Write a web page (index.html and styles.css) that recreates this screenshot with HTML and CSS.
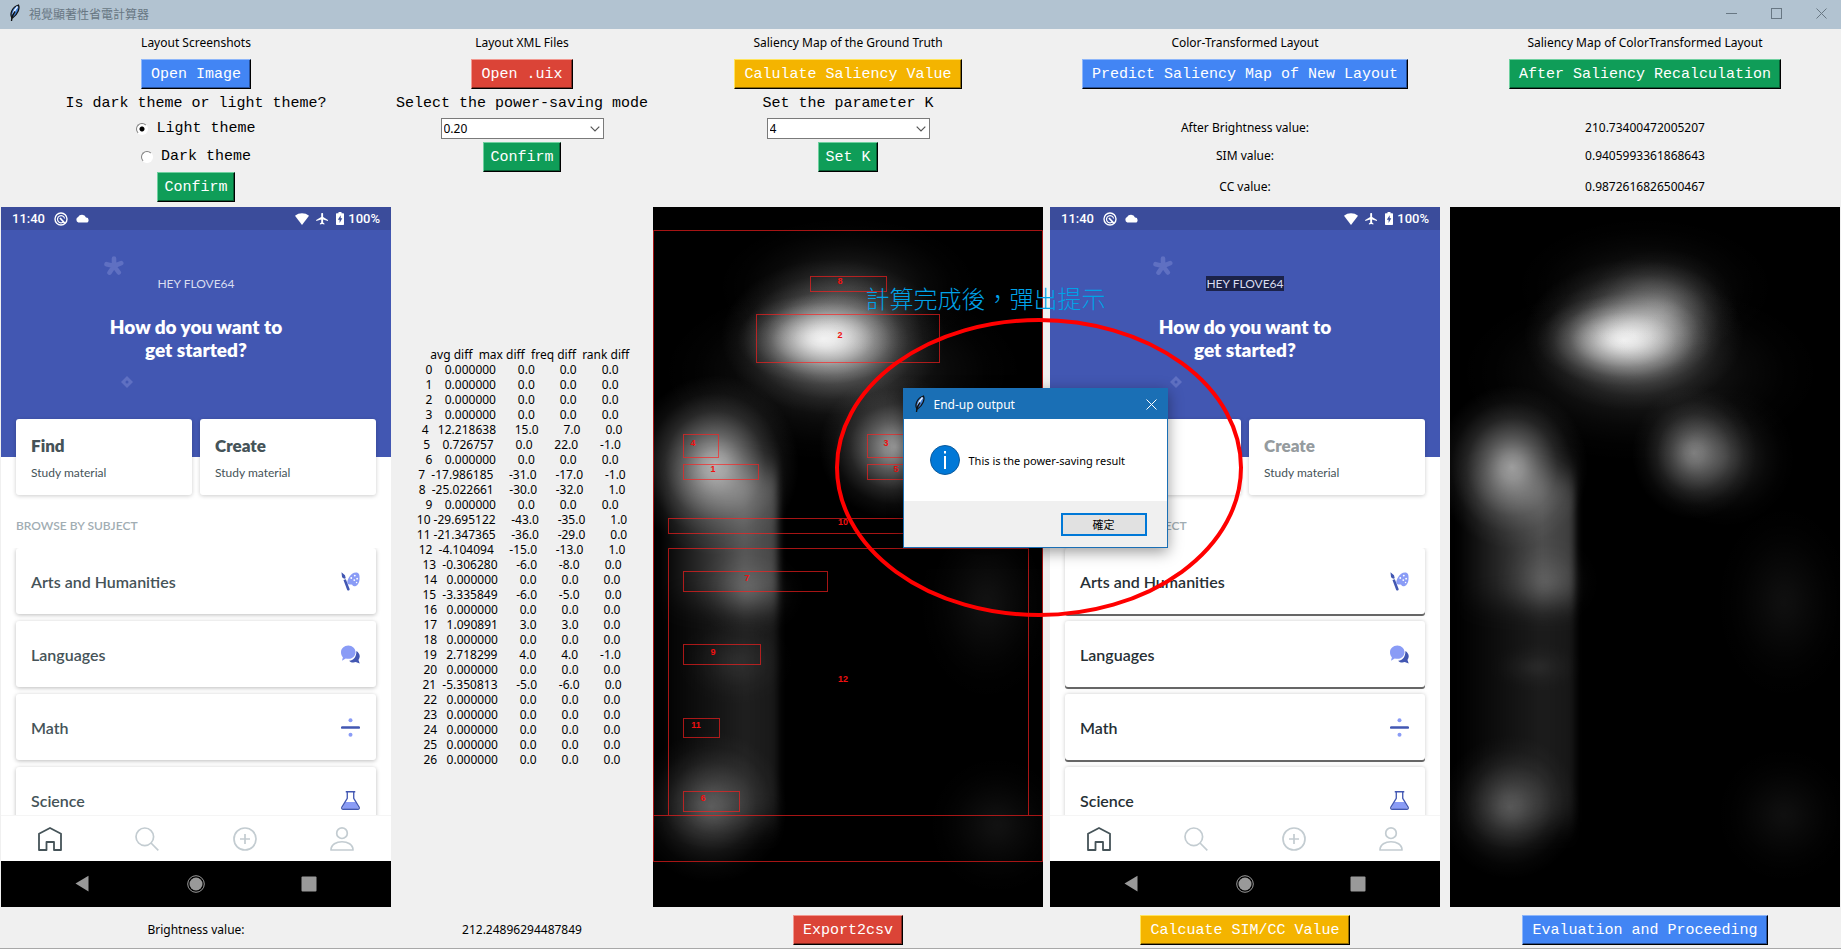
FILE: index.html
```html
<!DOCTYPE html>
<html lang="zh-Hant">
<head>
<meta charset="utf-8">
<title>視覺顯著性省電計算器</title>
<link rel="stylesheet" href="styles.css">
</head>
<body>
<svg class="defs" aria-hidden="true">
  <defs>
    <symbol id="feather" viewBox="0 0 16 18">
      <path d="M5 14C2.500 10 5 3 11.500 1c1.500 3-.5 9.500-6 13z" fill="#3f7fd6" stroke="#111" stroke-width="1.200"/>
      <path d="M6 10.500C7 7 8.500 4.500 10.500 2.500" stroke="#e8f2ff" stroke-width="1.600" fill="none"/>
      <path d="M4.500 17c0-3 1-6 3.500-9.500" stroke="#111" stroke-width="1.300" fill="none"/>
    </symbol>
    <symbol id="close" viewBox="0 0 11 11"><path d="M.5.5l10 10M10.500.5l-10 10" stroke="currentColor" fill="none"/></symbol>
    <symbol id="chevron" viewBox="0 0 10 6"><path d="M.7.7L5 5 9.300.7" stroke="#555" stroke-width="1.200" fill="none"/></symbol>
    <symbol id="record" viewBox="0 0 14 14">
      <circle cx="7" cy="7" r="6" fill="none" stroke="#fff" stroke-width="1.400"/>
      <path d="M9.800 9.600A3.600 3.600 0 1 1 10.600 6.500" fill="none" stroke="#fff" stroke-width="1.200"/>
      <path d="M6 6l5 5.500" stroke="#fff" stroke-width="1.800"/>
    </symbol>
    <symbol id="cloud" viewBox="0 0 14 9"><path d="M3.300 8.500a2.900 2.900 0 0 1-.2-5.400A4.300 4.300 0 0 1 11 3.500a2.500 2.500 0 0 1 .2 5z" fill="#fff"/></symbol>
    <symbol id="wifi" viewBox="0 0 14 12"><path d="M0 2.800C4 -.5 10 -.5 14 2.800L7 12z" fill="#fff"/></symbol>
    <symbol id="plane" viewBox="0 0 12 12"><path d="M12 8V6.900L7.100 4V.9a.9.9 0 0 0-1.900 0V4L.2 6.900V8l5-1.400v3L3.900 10.600V11.500l2.200-.6 2.300.6v-.9L7.100 9.600v-3z" fill="#fff"/></symbol>
    <symbol id="battery" viewBox="0 0 8 13"><path d="M2.500 0h3v1.300H7.300a.7.7 0 0 1 .7.700V12.300a.7.7 0 0 1-.7.700H.7a.7.7 0 0 1-.7-.7V2a.7.7 0 0 1 .7-.7h1.800z" fill="#fff"/><path d="M4.700 3.200L1.800 7.800h1.800v3.200l2.700-4.700H4.700z" fill="#3b4c9b"/></symbol>
    <symbol id="asterisk" viewBox="0 0 20 20"><path d="M10 10V2.500M10 10l7.200-2.800M10 10l4.800 6.500M10 10l-4.500 6.700M10 10L2.500 8.200" stroke="#5f70c2" stroke-width="4.600" stroke-linecap="round"/></symbol>
    <symbol id="gem" viewBox="0 0 12 12"><path d="M6 0l6 6-6 6-6-6z" fill="#5f70c2"/><circle cx="6" cy="6" r="1.500" fill="#4257b2"/></symbol>
    <symbol id="arts" viewBox="0 0 20 20">
      <path d="M16.500.6c2.600.3 3.300 3.200 3 7-.3 4.500-2.500 7.400-5.500 7.400-1.800 0-1.700-1.700-3-1.800-1.500-.2-3.600.4-4.200-1.300C5.900 9 10 0 16.500.6z" fill="#8a9cf6"/>
      <circle cx="14.500" cy="3.800" r="1" fill="#fff"/><circle cx="17" cy="7" r="1" fill="#fff"/><circle cx="10.800" cy="6.300" r="1" fill="#fff"/><circle cx="14" cy="8.500" r="1" fill="#fff"/><circle cx="16.400" cy="11" r=".8" fill="#fff"/>
      <path d="M.5.3l3.700 3.200.8 3-1.700.7L1.100 5.400zM2.600 8.400l2.500-.9 4 10.300c.3 1.600-1.800 2.600-2.700.9z" fill="#4257b2"/>
    </symbol>
    <symbol id="chat" viewBox="0 0 20 20">
      <path d="M8.500 16.500c4 .3 8-3.500 7.700-10.300 3.500 2 4.700 6.300 2.200 9.500l1.300 3.800-4.200-1.500c-2.600.9-5.300.4-7-1.500z" fill="#4257b2"/>
      <path d="M7.700.5c4.300 0 7.600 3.100 7.600 7s-3.300 7-7.600 7c-1 0-1.800-.1-2.700-.4L1 16.500l1-3.600C.7 11.500 0 9.700 0 7.500 0 3.600 3.400.5 7.700.5z" fill="#8a9cf6"/>
    </symbol>
    <symbol id="divide" viewBox="0 0 20 20"><path d="M1.300 10h17.400" stroke="#4257b2" stroke-width="2.700" stroke-linecap="round"/><circle cx="10" cy="2.400" r="2.100" fill="#8a9cf6"/><circle cx="10" cy="17.600" r="2.100" fill="#8a9cf6"/></symbol>
    <symbol id="flask" viewBox="0 0 20 20"><path d="M4.700 11.500h10.500l3.300 6.500-1.500.8H3L1.500 18z" fill="#8a9cf6"/><path d="M5 .8h10M6.600.8v7L1 17c-.6 1.200 0 2.200 1.300 2.200h15.400c1.300 0 1.900-1 1.300-2.200l-5.600-9.200v-7" fill="none" stroke="#4257b2" stroke-width="1.400"/></symbol>
    <symbol id="home" viewBox="0 0 24 24"><path d="M1 23V6.700L12 1l11 5.700V23h-7v-8H8.500v8z" fill="none" stroke="#455358" stroke-width="1.800" stroke-linejoin="round"/></symbol>
    <symbol id="search" viewBox="0 0 24 24"><circle cx="9.800" cy="9.800" r="8.800" fill="none" stroke="#c3ccd1" stroke-width="1.700"/><path d="M16 16l7.300 7.300" stroke="#c3ccd1" stroke-width="1.700"/></symbol>
    <symbol id="plus" viewBox="0 0 24 24"><circle cx="12" cy="12" r="11" fill="none" stroke="#c3ccd1" stroke-width="1.700"/><path d="M12 7v10M7 12h10" stroke="#c3ccd1" stroke-width="1.700"/></symbol>
    <symbol id="person" viewBox="0 0 24 24"><circle cx="12" cy="6.200" r="5.300" fill="none" stroke="#c3ccd1" stroke-width="1.700"/><path d="M1 23c0-11 22-11 22 0z" fill="none" stroke="#c3ccd1" stroke-width="1.700" stroke-linejoin="round"/></symbol>
    <symbol id="nav-back" viewBox="0 0 18 18"><path d="M2.500 8.500L15.500.8v15.700z" fill="#999"/></symbol>
    <symbol id="nav-home" viewBox="0 0 18 18"><circle cx="9" cy="9" r="8.300" fill="none" stroke="#999"/><circle cx="9" cy="9" r="6.500" fill="#999"/></symbol>
    <symbol id="nav-recent" viewBox="0 0 18 18"><rect x="1.500" y="1.500" width="15" height="15" rx="1" fill="#999"/></symbol>
    <radialGradient id="glow">
      <stop offset="0" stop-color="#fff"/><stop offset=".15" stop-color="#fff" stop-opacity=".86"/><stop offset=".35" stop-color="#fff" stop-opacity=".56"/><stop offset=".6" stop-color="#fff" stop-opacity=".23"/><stop offset=".8" stop-color="#fff" stop-opacity=".07"/><stop offset="1" stop-color="#fff" stop-opacity="0"/>
    </radialGradient>
    <linearGradient id="band" x2="1">
      <stop offset="0" stop-color="#fff" stop-opacity="0"/><stop offset=".35" stop-color="#fff" stop-opacity=".5"/><stop offset=".7" stop-color="#fff"/><stop offset=".95" stop-color="#fff" stop-opacity=".8"/><stop offset="1" stop-color="#fff" stop-opacity="0"/>
    </linearGradient>
    <filter id="soft" x="-30%" y="-30%" width="160%" height="160%"><feGaussianBlur stdDeviation="3 14"/></filter>
  </defs>
</svg>

<div class="window">
  <header class="titlebar">
    <svg class="feather"><use href="#feather"/></svg>
    <span class="title">視覺顯著性省電計算器</span>
    <div class="controls">
      <button class="control" aria-label="Minimize"><svg viewBox="0 0 11 11"><path d="M0 5.500h11" stroke="currentColor"/></svg></button>
      <button class="control" aria-label="Maximize"><svg viewBox="0 0 11 11"><rect x=".5" y=".5" width="10" height="10" fill="none" stroke="currentColor"/></svg></button>
      <button class="control" aria-label="Close"><svg><use href="#close"/></svg></button>
    </div>
  </header>

  <main class="board">
    <div class="cell">Layout Screenshots</div>
    <div class="cell">Layout XML Files</div>
    <div class="cell">Saliency Map of the Ground Truth</div>
    <div class="cell">Color-Transformed Layout</div>
    <div class="cell last">Saliency Map of ColorTransformed Layout</div>

    <div class="cell"><button class="btn blue">Open Image</button></div>
    <div class="cell"><button class="btn red">Open .uix</button></div>
    <div class="cell"><button class="btn yellow">Calulate Saliency Value</button></div>
    <div class="cell"><button class="btn blue">Predict Saliency Map of New Layout</button></div>
    <div class="cell last"><button class="btn green">After Saliency Recalculation</button></div>

    <div class="cell mono">Is dark theme or light theme?</div>
    <label class="cell mono" for="mode">Select the power-saving mode</label>
    <label class="cell mono" for="param">Set the parameter K</label>
    <div class="cell"></div>
    <div class="cell last"></div>

    <div class="cell"><label class="radio mono"><input type="radio" name="theme" checked>Light theme</label></div>
    <div class="cell"><span class="combo"><select id="mode"><option>0.20</option></select><svg><use href="#chevron"/></svg></span></div>
    <div class="cell"><span class="combo"><select id="param"><option>4</option></select><svg><use href="#chevron"/></svg></span></div>
    <div class="cell">After Brightness value:</div>
    <div class="cell last">210.73400472005207</div>

    <div class="cell"><label class="radio mono"><input type="radio" name="theme">Dark theme</label></div>
    <div class="cell"><button class="btn green small">Confirm</button></div>
    <div class="cell"><button class="btn green small">Set K</button></div>
    <div class="cell">SIM value:</div>
    <div class="cell last">0.9405993361868643</div>

    <div class="cell"><button class="btn green small">Confirm</button></div>
    <div class="cell"></div>
    <div class="cell"></div>
    <div class="cell">CC value:</div>
    <div class="cell last">0.9872616826500467</div>

    <section class="picture">
      <div class="phone">
        <div class="status"><span>11:40</span><svg class="i14"><use href="#record"/></svg><svg class="cloud"><use href="#cloud"/></svg><svg class="i14 push"><use href="#wifi"/></svg><svg class="i12"><use href="#plane"/></svg><span class="charge"><svg><use href="#battery"/></svg>100%</span></div>
        <div class="hero">
          <svg class="asterisk"><use href="#asterisk"/></svg>
          <svg class="gem"><use href="#gem"/></svg>
          <p class="hey"><span>HEY FLOVE64</span></p>
          <h2>How do you want to<br>get started?</h2>
        </div>
        <div class="tiles">
          <div class="tile"><h3>Find</h3><p>Study material</p></div>
          <div class="tile"><h3>Create</h3><p>Study material</p></div>
        </div>
        <h4>BROWSE BY SUBJECT</h4>
        <ul class="subjects">
          <li>Arts and Humanities<svg><use href="#arts"/></svg></li>
          <li>Languages<svg><use href="#chat"/></svg></li>
          <li>Math<svg><use href="#divide"/></svg></li>
          <li>Science<svg><use href="#flask"/></svg></li>
        </ul>
        <div class="tabs"><svg><use href="#home"/></svg><svg><use href="#search"/></svg><svg><use href="#plus"/></svg><svg><use href="#person"/></svg></div>
        <div class="keys"><svg><use href="#nav-back"/></svg><svg><use href="#nav-home"/></svg><svg><use href="#nav-recent"/></svg></div>
      </div>
    </section>

    <section class="report">
      <table>
        <thead><tr><th>  </th><th>   avg diff</th><th>  max diff</th><th>  freq diff</th><th>  rank diff</th></tr></thead>
        <tbody>
          <tr><td>0 </td><td>   0.000000</td><td>       0.0</td><td>        0.0</td><td>        0.0</td></tr>
          <tr><td>1 </td><td>   0.000000</td><td>       0.0</td><td>        0.0</td><td>        0.0</td></tr>
          <tr><td>2 </td><td>   0.000000</td><td>       0.0</td><td>        0.0</td><td>        0.0</td></tr>
          <tr><td>3 </td><td>   0.000000</td><td>       0.0</td><td>        0.0</td><td>        0.0</td></tr>
          <tr><td>4 </td><td>  12.218638</td><td>      15.0</td><td>        7.0</td><td>        0.0</td></tr>
          <tr><td>5 </td><td>   0.726757</td><td>       0.0</td><td>       22.0</td><td>       -1.0</td></tr>
          <tr><td>6 </td><td>   0.000000</td><td>       0.0</td><td>        0.0</td><td>        0.0</td></tr>
          <tr><td>7 </td><td> -17.986185</td><td>     -31.0</td><td>      -17.0</td><td>       -1.0</td></tr>
          <tr><td>8 </td><td> -25.022661</td><td>     -30.0</td><td>      -32.0</td><td>        1.0</td></tr>
          <tr><td>9 </td><td>   0.000000</td><td>       0.0</td><td>        0.0</td><td>        0.0</td></tr>
          <tr><td>10</td><td> -29.695122</td><td>     -43.0</td><td>      -35.0</td><td>        1.0</td></tr>
          <tr><td>11</td><td> -21.347365</td><td>     -36.0</td><td>      -29.0</td><td>        0.0</td></tr>
          <tr><td>12</td><td>  -4.104094</td><td>     -15.0</td><td>      -13.0</td><td>        1.0</td></tr>
          <tr><td>13</td><td>  -0.306280</td><td>      -6.0</td><td>       -8.0</td><td>        0.0</td></tr>
          <tr><td>14</td><td>   0.000000</td><td>       0.0</td><td>        0.0</td><td>        0.0</td></tr>
          <tr><td>15</td><td>  -3.335849</td><td>      -6.0</td><td>       -5.0</td><td>        0.0</td></tr>
          <tr><td>16</td><td>   0.000000</td><td>       0.0</td><td>        0.0</td><td>        0.0</td></tr>
          <tr><td>17</td><td>   1.090891</td><td>       3.0</td><td>        3.0</td><td>        0.0</td></tr>
          <tr><td>18</td><td>   0.000000</td><td>       0.0</td><td>        0.0</td><td>        0.0</td></tr>
          <tr><td>19</td><td>   2.718299</td><td>       4.0</td><td>        4.0</td><td>       -1.0</td></tr>
          <tr><td>20</td><td>   0.000000</td><td>       0.0</td><td>        0.0</td><td>        0.0</td></tr>
          <tr><td>21</td><td>  -5.350813</td><td>      -5.0</td><td>       -6.0</td><td>        0.0</td></tr>
          <tr><td>22</td><td>   0.000000</td><td>       0.0</td><td>        0.0</td><td>        0.0</td></tr>
          <tr><td>23</td><td>   0.000000</td><td>       0.0</td><td>        0.0</td><td>        0.0</td></tr>
          <tr><td>24</td><td>   0.000000</td><td>       0.0</td><td>        0.0</td><td>        0.0</td></tr>
          <tr><td>25</td><td>   0.000000</td><td>       0.0</td><td>        0.0</td><td>        0.0</td></tr>
          <tr><td>26</td><td>   0.000000</td><td>       0.0</td><td>        0.0</td><td>        0.0</td></tr>
        </tbody>
      </table>
    </section>

    <section class="picture">
      <svg class="map" viewBox="0 0 390 700" role="img" aria-label="Saliency map of the ground truth">
        <rect width="390" height="700" fill="#000"/>
        <g fill="url(#glow)">
          <ellipse cx="180" cy="130" rx="112" ry="78" opacity=".7"/>
          <ellipse cx="170" cy="132" rx="86" ry="46" opacity=".85"/>
          <ellipse cx="195" cy="80" rx="130" ry="70" opacity=".14"/>
          <ellipse cx="190" cy="165" rx="180" ry="90" opacity=".16"/>
          <ellipse cx="62" cy="258" rx="84" ry="90" opacity=".68"/>
          <ellipse cx="242" cy="240" rx="76" ry="72" opacity=".6"/>
          <ellipse cx="96" cy="385" rx="56" ry="46" opacity=".14"/>
          <ellipse cx="82" cy="455" rx="60" ry="44" opacity=".08"/>
          <ellipse cx="58" cy="600" rx="76" ry="76" opacity=".32"/>
          <ellipse cx="334" cy="395" rx="70" ry="100" opacity=".07"/>
          <ellipse cx="344" cy="618" rx="70" ry="70" opacity=".07"/>
        </g>
        <g filter="url(#soft)" fill="url(#band)">
          <rect x="6" y="265" width="122" height="130" opacity=".34"/>
          <rect x="6" y="395" width="122" height="220" opacity=".12"/>
        </g>
        <g class="boxes">
          <path d="M.5 23.500h389v631H.5zM.5 608.500h389"/>
          <rect x="157.500" y="69.500" width="76" height="15"/>
          <rect x="103.500" y="107.500" width="183" height="48"/>
          <rect x="30.500" y="227.500" width="35" height="23"/>
          <rect x="30.500" y="257.500" width="75" height="15"/>
          <rect x="214.500" y="227.500" width="60" height="23"/>
          <rect x="214.500" y="257.500" width="75" height="15"/>
          <rect x="15.500" y="311.500" width="360" height="15"/>
          <path d="M15.500 608V341.500h360V608"/>
          <rect x="30.500" y="364.500" width="144" height="20"/>
          <rect x="30.500" y="437.500" width="77" height="20"/>
          <rect x="30.500" y="511.500" width="36" height="19"/>
          <rect x="30.500" y="584.500" width="56" height="20"/>
        </g>
        <g class="marks">
          <text x="187" y="77">8</text><text x="187" y="131">2</text><text x="40" y="239">4</text><text x="233" y="239">3</text>
          <text x="60" y="265">1</text><text x="243" y="265">5</text><text x="190" y="318">10</text><text x="94" y="374">7</text>
          <text x="60" y="448">9</text><text x="190" y="475">12</text><text x="43" y="521">11</text><text x="50" y="594">6</text>
        </g>
      </svg>
    </section>

    <section class="picture wide">
      <div class="phone altered">
        <div class="status"><span>11:40</span><svg class="i14"><use href="#record"/></svg><svg class="cloud"><use href="#cloud"/></svg><svg class="i14 push"><use href="#wifi"/></svg><svg class="i12"><use href="#plane"/></svg><span class="charge"><svg><use href="#battery"/></svg>100%</span></div>
        <div class="hero">
          <svg class="asterisk"><use href="#asterisk"/></svg>
          <svg class="gem"><use href="#gem"/></svg>
          <p class="hey"><span>HEY FLOVE64</span></p>
          <h2>How do you want to<br>get started?</h2>
        </div>
        <div class="tiles">
          <div class="tile"><h3>Find</h3><p>Study material</p></div>
          <div class="tile"><h3>Create</h3><p>Study material</p></div>
        </div>
        <h4>BROWSE BY SUBJECT</h4>
        <ul class="subjects">
          <li>Arts and Humanities<svg><use href="#arts"/></svg></li>
          <li>Languages<svg><use href="#chat"/></svg></li>
          <li>Math<svg><use href="#divide"/></svg></li>
          <li>Science<svg><use href="#flask"/></svg></li>
        </ul>
        <div class="tabs"><svg><use href="#home"/></svg><svg><use href="#search"/></svg><svg><use href="#plus"/></svg><svg><use href="#person"/></svg></div>
        <div class="keys"><svg><use href="#nav-back"/></svg><svg><use href="#nav-home"/></svg><svg><use href="#nav-recent"/></svg></div>
      </div>
    </section>

    <section class="picture last">
      <svg class="map" viewBox="0 0 390 700" role="img" aria-label="Saliency map of the color-transformed layout">
        <rect width="390" height="700" fill="#000"/>
        <g fill="url(#glow)">
          <ellipse cx="184" cy="128" rx="110" ry="76" opacity=".65"/>
          <ellipse cx="174" cy="133" rx="88" ry="46" opacity=".85"/>
          <ellipse cx="212" cy="102" rx="76" ry="60" opacity=".3"/>
          <ellipse cx="195" cy="80" rx="130" ry="70" opacity=".1"/>
          <ellipse cx="190" cy="165" rx="180" ry="90" opacity=".14"/>
          <ellipse cx="62" cy="260" rx="76" ry="82" opacity=".6"/>
          <ellipse cx="244" cy="246" rx="62" ry="66" opacity=".46"/>
          <ellipse cx="275" cy="250" rx="70" ry="70" opacity=".16"/>
          <ellipse cx="97" cy="375" rx="52" ry="46" opacity=".12"/>
          <ellipse cx="86" cy="460" rx="50" ry="26" opacity=".06"/>
          <ellipse cx="60" cy="600" rx="70" ry="72" opacity=".3"/>
          <ellipse cx="334" cy="395" rx="70" ry="100" opacity=".06"/>
          <ellipse cx="334" cy="608" rx="70" ry="70" opacity=".06"/>
        </g>
        <g filter="url(#soft)" fill="url(#band)">
          <rect x="6" y="270" width="122" height="125" opacity=".3"/>
          <rect x="6" y="395" width="122" height="220" opacity=".11"/>
        </g>
      </svg>
    </section>

    <div class="cell foot">Brightness value:</div>
    <div class="cell foot">212.24896294487849</div>
    <div class="cell foot"><button class="btn red">Export2csv</button></div>
    <div class="cell foot"><button class="btn yellow">Calcuate SIM/CC Value</button></div>
    <div class="cell foot last"><button class="btn blue">Evaluation and Proceeding</button></div>
  </main>

  <p class="note">計算完成後，彈出提示</p>
  <svg class="ring" viewBox="0 0 408 299"><ellipse cx="204" cy="149.500" rx="202" ry="147.500" fill="none" stroke="#f00" stroke-width="4"/></svg>
  <div class="dialog" role="dialog" aria-labelledby="dialog-title">
    <div class="dialog-bar">
      <svg class="feather"><use href="#feather"/></svg>
      <span id="dialog-title">End-up output</span>
      <button class="control" aria-label="Close"><svg><use href="#close"/></svg></button>
    </div>
    <div class="dialog-body">
      <svg class="info" viewBox="0 0 30 30"><circle cx="15" cy="15" r="14.500" fill="#0078d7" stroke="#0c5a9c"/><path d="M15 11v13M15 6v2.500" stroke="#fff" stroke-width="2"/></svg>
      <span>This is the power-saving result</span>
    </div>
    <div class="dialog-foot"><button class="ok">確定</button></div>
  </div>
</div>
</body>
</html>
```

FILE: styles.css
```css
* { box-sizing: border-box; }

body {
  margin: 0;
  background: #f0f0f0;
  color: #000;
  font: 12px/15px "Noto Sans", "Noto Sans CJK TC", sans-serif;
}

p, h2, h3, h4, ul { margin: 0; padding: 0; }
button, select, input { font: inherit; margin: 0; }
svg { display: block; flex: none; }
.defs { position: absolute; width: 0; height: 0; }

.window {
  position: relative;
  min-height: 100vh;
  border-bottom: 1px solid #a8a8a8;
}

/* Title bar */
.titlebar {
  display: flex;
  align-items: center;
  height: 29px;
  padding: 0 14px 3px 7px;
  background: #b2c3d1;
  color: #687783;
}
.feather { width: 16px; height: 18px; }
.title { margin-left: 6px; font-family: "Noto Sans CJK TC", sans-serif; }
.controls { display: flex; gap: 34px; margin-left: auto; }
.control { padding: 0; border: 0; background: none; color: inherit; }
.control svg { width: 11px; height: 11px; }

/* Grid of controls and pictures */
.board {
  display: grid;
  grid-template-columns: 392fr 260fr 392fr 402fr 395fr;
  grid-template-rows: 28px 34px 25px 25px 31px 30px auto auto;
}
.cell {
  display: flex;
  align-items: center;
  justify-content: center;
  min-width: 0;
  padding-bottom: 2px;
  white-space: nowrap;
}
.cell:has(.btn, .combo, .radio) { padding-bottom: 0; }
.cell.mono { padding: 1px 0 0; }
.cell.last { padding-right: 1px; padding-left: 4px; }
.cell.foot { padding-top: 8px; padding-bottom: 5px; }
.cell.foot:has(.btn) { padding-bottom: 3px; }
.mono { font: 15px/18px "Liberation Mono", monospace; }

.btn {
  height: 30px;
  padding: 2px 9px 0;
  border: 1px solid;
  border-color: var(--light) #000 #000 var(--light);
  box-shadow: inset -1px -1px var(--dark);
  background: var(--face);
  color: #fff;
  font: 15px/18px "Liberation Mono", monospace;
}
.btn.small { padding: 2px 6px 0; }
.blue { --face: #4285f4; --light: #8db6fa; --dark: #27509a; }
.red { --face: #db4437; --light: #f29890; --dark: #84281f; }
.yellow { --face: #f4b400; --light: #ffe45c; --dark: #926c00; }
.green { --face: #0f9d58; --light: #6fd09f; --dark: #085e34; }

.radio { display: flex; align-items: center; gap: 8px; }
.radio input {
  appearance: none;
  width: 12px;
  height: 12px;
  border: 1px solid;
  border-color: #808080 #fff #fff #808080;
  border-radius: 50%;
  background: #fff;
}
.radio input:checked { background: radial-gradient(circle, #000 2px, #fff 3px); }

.combo { display: grid; width: 163px; }
.combo > * { grid-area: 1 / 1; }
.combo select {
  appearance: none;
  width: 100%;
  height: 21px;
  padding: 0 2px;
  border: 1px solid #7a7a7a;
  border-radius: 0;
  background: #fff;
  color: #000;
}
.combo svg {
  width: 10px;
  height: 6px;
  margin-right: 4px;
  place-self: center end;
  pointer-events: none;
}

.picture { min-width: 0; padding: 5px 1px 0; }
.picture.wide { padding: 5px 6px 0; }
.picture.last { padding: 5px 1px 0 4px; }

/* Phone screen */
.phone {
  display: flex;
  flex-direction: column;
  height: 700px;
  overflow: hidden;
  background: #fff;
  color: #455358;
  font-family: Lato, sans-serif;
}
.status {
  display: flex;
  align-items: center;
  flex: none;
  height: 23px;
  padding: 0 11px;
  background: #3b4c9b;
  color: #fff;
  font: 500 13px/16px Roboto, sans-serif;
}
.i14 { width: 14px; height: 14px; margin-left: 9px; }
.cloud { width: 14px; height: 9px; margin-left: 7px; }
.push { height: 12px; margin-left: auto; }
.i12 { width: 12px; height: 12px; margin-left: 7px; }
.charge { display: flex; align-items: center; gap: 4px; margin-left: 8px; }
.charge svg { width: 8px; height: 13px; }
.hero {
  position: relative;
  flex: none;
  height: 227px;
  padding-top: 46px;
  background: #4257b2;
  color: #fff;
  text-align: center;
}
.asterisk { position: absolute; left: calc(50% - 92px); top: 26px; width: 20px; height: 20px; }
.gem { position: absolute; left: calc(50% - 75px); top: 146px; width: 12px; height: 12px; }
.hey { font-size: 12px; line-height: 15px; color: #d9ddf0; }
.hey span { display: inline-block; }
.altered .hey span { background: #1b2249; }
h2 { margin-top: 24px; font-size: 19px; font-weight: 800; line-height: 23px; }
.tiles {
  position: relative;
  display: grid;
  grid-template-columns: 1fr 1fr;
  gap: 8px;
  flex: none;
  margin: -38px 15px 0;
}
.tile {
  height: 76px;
  padding: 17px 15px 0;
  border-radius: 3px;
  background: #fff;
  box-shadow: 0 1px 4px #0003;
}
h3 { font-size: 17px; font-weight: 800; line-height: 20px; }
.tile p { margin-top: 9px; font-size: 12px; line-height: 15px; }
h4 { margin: 23px 15px 14px; font-size: 12px; font-weight: 600; line-height: 16px; color: #a1adb3; }
.subjects {
  display: flex;
  flex-direction: column;
  gap: 7px;
  flex: 1 1 0;
  min-height: 0;
  padding: 0 15px;
  overflow: hidden;
  list-style: none;
}
.subjects li {
  display: flex;
  align-items: center;
  justify-content: space-between;
  flex: none;
  height: 66px;
  padding: 0 16px 0 15px;
  border-radius: 3px;
  background: #fff;
  box-shadow: 0 1px 4px #0004;
  font-size: 16px;
  font-weight: 600;
}
.subjects svg { width: 19px; height: 19px; }
.altered .subjects li { color: #262f35; box-shadow: 0 2px 0 #666, 0 0 4px #0003; }
.altered .tile + .tile h3 { color: #959b9e; }
.tabs {
  display: grid;
  grid-template-columns: repeat(4, 1fr);
  place-items: center;
  flex: none;
  height: 46px;
  border-top: 1px solid #f5f5f5;
}
.tabs svg { width: 24px; height: 24px; }
.keys {
  display: flex;
  align-items: center;
  justify-content: space-between;
  flex: none;
  height: 46px;
  padding: 0 73px 0 72px;
  background: #000;
}
.keys svg { width: 18px; height: 18px; }

/* Report */
.report { display: flex; align-items: center; justify-content: center; padding-top: 2px; }
.report table, .report thead, .report tbody, .report tr { display: block; }
.report tr { height: 15px; text-align: center; white-space: pre; }
.report th, .report td { display: inline; padding: 0; font-weight: 400; }

/* Saliency maps */
.map { width: 100%; height: 700px; background: #000; }
.boxes { fill: none; stroke: #ff1e1e; stroke-opacity: .65; }
.marks { fill: #f01010; font: 700 9px "Liberation Sans", sans-serif; text-anchor: middle; }

/* Layers above the board */
.note {
  position: absolute;
  left: calc(50% - 55px);
  top: 280px;
  color: #00a2e8;
  font: 300 24px/36px "Noto Sans CJK TC", sans-serif;
}
.ring {
  position: absolute;
  left: calc(50% - 86px);
  top: 318px;
  width: 408px;
  height: 299px;
  pointer-events: none;
}
.dialog {
  position: absolute;
  left: calc(50% - 18px);
  top: 388px;
  width: 265px;
  border: 1px solid #1a6fb5;
  background: #fff;
  box-shadow: 0 4px 14px #0006;
}
.dialog-bar {
  display: flex;
  align-items: center;
  gap: 6px;
  height: 30px;
  padding: 0 10px 0 8px;
  background: #1a6fb5;
  color: #fff;
}
.dialog-bar .control { margin-left: auto; }
.dialog-body {
  display: flex;
  align-items: center;
  gap: 9px;
  height: 82px;
  padding-left: 26px;
  font-size: 11px;
}
.info { width: 30px; height: 30px; }
.dialog-foot {
  display: flex;
  align-items: center;
  justify-content: flex-end;
  height: 46px;
  padding: 0 20px;
  background: #f0f0f0;
}
.ok {
  width: 86px;
  height: 23px;
  padding: 0;
  border: 2px solid #0078d7;
  background: #e1e1e1;
  color: #000;
  font: 11px/15px "Noto Sans CJK TC", sans-serif;
}
```
